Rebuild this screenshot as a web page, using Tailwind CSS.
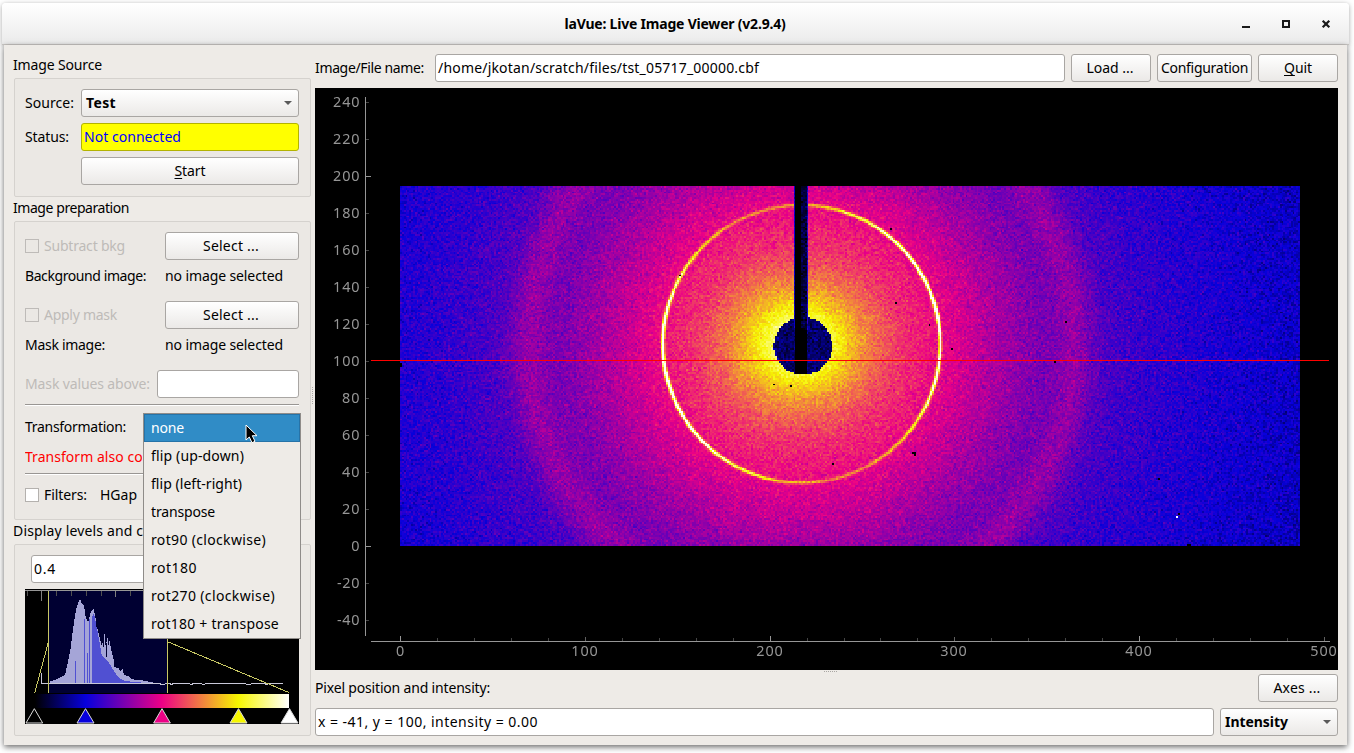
<!DOCTYPE html>
<html lang="en">
<head>
<meta charset="utf-8">
<title>laVue: Live Image Viewer (v2.9.4)</title>
<script src="https://cdn.jsdelivr.net/npm/@tailwindcss/browser@4"></script>
</head>
<body class="w-[1354px] h-[753px] overflow-hidden bg-white text-black font-['Noto_Sans','Open_Sans',sans-serif] text-[14px] leading-5 whitespace-nowrap">
<div class="flex flex-col w-[1354px] h-[753px] pt-[3px] overflow-hidden">
  <header class="ml-[2px] mr-[5px] h-[42px] shrink-0 flex items-center bg-linear-to-b from-white to-[#ebebeb] border-b border-[#ccc9c6] rounded-t-sm shadow-[0_1px_5px_rgba(0,0,0,0.35)]">
    <div class="w-[1236px] flex justify-center pl-[110px]"><b data-w="221">laVue: Live Image Viewer (v2.9.4)</b></div>
    <svg class="w-[100px] h-[14px]" viewBox="1238 17 100 14" shape-rendering="crispEdges">
      <rect x="1242" y="26" width="8" height="2" fill="#1a1a1a"/>
      <rect x="1283" y="21" width="6" height="6" fill="none" stroke="#1a1a1a" stroke-width="2"/>
      <path d="M1322.700 20.700L1329.300 27.300M1329.300 20.700L1322.700 27.300" stroke="#1a1a1a" stroke-width="2.200" shape-rendering="auto"/>
    </svg>
  </header>
  <main class="relative ml-[4px] w-[1343px] h-[700px] shrink-0 bg-[#eeebe7] flex shadow-[0_2px_6px_0px_rgba(0,0,0,0.6)]">
    <aside class="w-[307px] shrink-0 pl-[10px] pt-[10px] flex flex-col">
      <div class="-ml-px h-5"><span data-w="89">Image Source</span></div>
      <section class="mt-[3px] h-[119px] border border-[#d5d2ce] bg-[#ebe8e4] rounded-[2px] pl-[10px] pr-[11px] pt-[10px] flex flex-col gap-[6px]">
        <div class="flex items-center"><div class="w-[56px]"><span data-w="49">Source:</span></div>
          <div class="flex-1 h-7 border border-[#a9a6a3] rounded-[3px] bg-linear-to-b from-white to-[#ebe9e7] flex items-center justify-between pl-[4px] pr-[6px]"><b data-w="30">Test</b><svg class="w-2 h-1" viewBox="0 0 8 4"><path d="M0 0H8L4 4Z" fill="#5a5a5a"/></svg></div></div>
        <div class="flex items-center"><div class="w-[56px]"><span data-w="44">Status:</span></div>
          <div class="flex-1 h-7 border border-[#b3b300] rounded-[3px] bg-[#ffff00] text-[#0000ff] flex items-center pl-[2px]"><span data-w="97">Not connected</span></div></div>
        <div class="ml-[56px] h-7 border border-[#a9a6a3] rounded-[3px] bg-linear-to-b from-white to-[#ebe9e7] flex items-center justify-center"><span data-w="31"><u class="underline-offset-2">S</u>tart</span></div>
      </section>
      <div class="-ml-px mt-[1px] h-5"><span data-w="116">Image preparation</span></div>
      <section class="mt-[3px] h-[299px] border border-[#d5d2ce] bg-[#ebe8e4] rounded-[2px] pl-[10px] pr-[11px] pt-[10px] flex flex-col">
        <div class="flex items-center h-7 text-[#bebbb8]"><i class="w-[14px] h-[14px] border border-[#bebbb8] mr-[5px]"></i><div class="w-[121px]"><span data-w="81">Subtract bkg</span></div>
          <div class="flex-1 h-7 border border-[#a9a6a3] rounded-[3px] bg-linear-to-b from-white to-[#ebe9e7] text-black flex items-center justify-center pr-[2px]"><span data-w="56">Select ...</span></div></div>
        <div class="flex items-center h-8"><div class="w-[140px]"><span data-w="121">Background image:</span></div><span data-w="118">no image selected</span></div>
        <div class="mt-[9px] flex items-center h-7 text-[#bebbb8]"><i class="w-[14px] h-[14px] border border-[#bebbb8] mr-[5px]"></i><div class="w-[121px]"><span data-w="73">Apply mask</span></div>
          <div class="flex-1 h-7 border border-[#a9a6a3] rounded-[3px] bg-linear-to-b from-white to-[#ebe9e7] text-black flex items-center justify-center pr-[2px]"><span data-w="56">Select ...</span></div></div>
        <div class="flex items-center h-8"><div class="w-[140px]"><span data-w="80">Mask image:</span></div><span data-w="118">no image selected</span></div>
        <div class="mt-[9px] flex items-center h-7 text-[#bebbb8]"><div class="w-[132px]"><span data-w="125">Mask values above:</span></div><div class="flex-1 h-7 border border-[#a9a6a3] rounded-[3px] bg-white"></div></div>
        <div class="mt-[6px] h-[2px] border-t border-[#999693] bg-white"></div>
        <div class="mt-[11px] h-5"><span data-w="101">Transformation:</span></div>
        <div class="mt-[10px] h-5 w-[117px] overflow-hidden text-[#ff0000]"><span data-w="148">Transform also cosmic</span></div>
        <div class="mt-[6px] h-[2px] border-t border-[#999693] bg-white"></div>
        <div class="mt-[10px] flex items-center h-5"><i class="w-[14px] h-[14px] border border-[#b4b1ae] bg-white mr-[5px]"></i><div class="w-[56px]"><span data-w="43">Filters:</span></div><span data-w="37">HGap</span></div>
      </section>
      <div class="-ml-px mt-[1px] h-5 w-[150px] overflow-hidden"><span data-w="164">Display levels and colors</span></div>
      <section class="mt-[3px] h-[192px] border border-[#d5d2ce] bg-[#ebe8e4] rounded-[2px] pl-[10px] pr-[11px] pt-[10px]">
        <div class="ml-[6px] h-7 border border-[#a9a6a3] rounded-[3px] bg-white flex items-center pl-[2px]"><span data-w="22">0.4</span></div>
        <svg class="mt-[6px] block w-[274px] h-[135px]" viewBox="75 87 822 405" shape-rendering="crispEdges">
          <defs><linearGradient id="flame"><stop offset="0" stop-color="#000"/><stop offset=".2" stop-color="#0700dc"/><stop offset=".5" stop-color="#ec0086"/><stop offset=".8" stop-color="#f6f600"/><stop offset="1" stop-color="#fff"/></linearGradient></defs>
          <rect x="75" y="87" width="822" height="405" fill="#000"/>
          <rect x="146" y="93" width="357" height="306" fill="#000032"/>
          <path d="M150 371V365L165 360L185 350L195 345L205 300L212 265L218 215L223 180L230 140L236 125L241 118L245 130L252 135L256 165L261 182L267 185L270 160L280 145L286 170L292 205L300 235L305 258L310 240L314 218L317 262L322 228L325 258L328 240L333 265L340 295L348 325L355 322L362 335L368 325L372 345L385 348L395 358L420 360L445 365L470 370Z" fill="#a5a5d7"/>
          <path d="M275 371V172L282 160L290 200L300 255L305 285L325 305L340 330L355 352L375 363L450 370Z" fill="#5050d2"/>
          <path d="M226.500 303V371M253.500 177V371M262.500 280V371M268 177V371" stroke="#5050d2" stroke-width="3"/>
          <path d="M289 200V160M311 262V235M319 290V250M344 320V310" stroke="#000032" stroke-width="3"/>
          <path d="M124.500 340V370.500H480l4 3h10l4-3h12l3 3h3l3-3h50l4 3h3l3-3h26l3 3h6l3-3h120l3 3h12l3-3h40l3 3h3l3-3H849" fill="none" stroke="#c8c8d8" stroke-width="3"/>
          <path d="M75 91.500H897" stroke="#969696" stroke-width="3"/>
          <path d="M82.500 93V107M169.500 93V107M214.500 93V107M259.500 93V107M304.500 93V107M391.500 93V107" stroke="#505050" stroke-width="3"/>
          <path d="M124.500 93V123M346.500 93V111" stroke="#808080" stroke-width="3"/>
          <path d="M145.500 93V399M502.500 93V399M145.500 245L104 399M502.500 245L868 398" stroke="#c8c864" stroke-width="3" fill="none"/>
          <rect x="105" y="402" width="762" height="42" fill="url(#flame)"/>
          <g stroke="#dcdcdc" stroke-width="3" shape-rendering="auto"><path d="M103 446L78 489H128Z" fill="#000"/><path d="M256.500 446L231 489H282Z" fill="#0700dc"/><path d="M486 446L461 489H511Z" fill="#ec0086"/><path d="M715.500 446L690 489H741Z" fill="#f6f600"/><path d="M868.500 446L843 489H894Z" fill="#fff"/></g>
        </svg>
      </section>
    </aside>
    <div class="w-[4px] shrink-0 flex items-center justify-center"><i class="mt-[1px] w-[2px] h-[17px] border-l border-dotted border-[#aaa7a4]"></i></div>
    <section class="w-[1023px] shrink-0 pt-[9px] flex flex-col">
      <div class="flex items-center h-7">
        <div class="w-[120px]"><span data-w="109">Image/File name:</span></div>
        <div class="w-[630px] h-7 border border-[#a9a6a3] rounded-[3px] bg-white flex items-center pl-[2px]"><span data-w="321">/home/jkotan/scratch/files/tst_05717_00000.cbf</span></div>
        <div class="ml-[6px] w-[80px] h-7 border border-[#a9a6a3] rounded-[3px] bg-linear-to-b from-white to-[#ebe9e7] flex items-center justify-center pr-[2px]"><span data-w="47">Load ...</span></div>
        <div class="ml-[6px] w-[95px] h-7 border border-[#a9a6a3] rounded-[3px] bg-linear-to-b from-white to-[#ebe9e7] flex items-center justify-center"><span data-w="87">Configuration</span></div>
        <div class="ml-[6px] w-[80px] h-7 border border-[#a9a6a3] rounded-[3px] bg-linear-to-b from-white to-[#ebe9e7] flex items-center justify-center"><span data-w="28"><u class="underline-offset-2">Q</u>uit</span></div>
      </div>
      <div class="relative mt-[6px] h-[582px] bg-black">
        <canvas id="frame" width="487" height="195" class="absolute left-[85px] top-[98px] w-[900px] h-[360px] [image-rendering:pixelated]"></canvas>
        <svg id="axes" class="absolute inset-0 w-[1023px] h-[582px]" viewBox="315 88 1023 582" fill="#969696" font-size="14.400">
          <g shape-rendering="crispEdges"><rect x="365" y="97" width="1" height="539"/><rect x="371" y="641" width="959" height="1"/><rect x="371" y="360" width="958" height="1" fill="#ff0000"/></g>
        </svg>
      </div>
      <div class="mt-[4px] h-7 flex items-center justify-between"><span data-w="175">Pixel position and intensity:</span>
        <div class="w-[80px] h-7 border border-[#a9a6a3] rounded-[3px] bg-linear-to-b from-white to-[#ebe9e7] flex items-center justify-center pr-[2px]"><span data-w="47">Axes ...</span></div></div>
      <div class="mt-[6px] flex gap-[6px]"><div class="w-[899px] h-7 border border-[#a9a6a3] rounded-[3px] bg-white flex items-center pl-[2px]"><span data-w="220">x = -41, y = 100, intensity = 0.00</span></div>
        <div class="flex-1 h-7 border border-[#a9a6a3] rounded-[3px] bg-linear-to-b from-white to-[#ebe9e7] flex items-center justify-between pl-[4px] pr-[6px]"><b data-w="63">Intensity</b><svg class="w-2 h-1" viewBox="0 0 8 4"><path d="M0 0H8L4 4Z" fill="#5a5a5a"/></svg></div></div>
    </section>
    <i class="absolute left-[820px] top-[626px] w-[13px] h-px border-t border-dotted border-[#aaa7a4]"></i>
    <div class="absolute left-[139px] top-[368px] w-[158px] h-[226px] border border-[#8f8c89] bg-[#eeebe7] flex flex-col">
      <div class="h-7 bg-[#308cc6] border border-[#2673a8] text-white flex items-center pl-[6px]"><span data-w="33">none</span></div>
      <div class="h-7 flex items-center pl-[7px]"><span data-w="93">flip (up-down)</span></div>
      <div class="h-7 flex items-center pl-[7px]"><span data-w="91">flip (left-right)</span></div>
      <div class="h-7 flex items-center pl-[7px]"><span data-w="64">transpose</span></div>
      <div class="h-7 flex items-center pl-[7px]"><span data-w="115">rot90 (clockwise)</span></div>
      <div class="h-7 flex items-center pl-[7px]"><span data-w="46">rot180</span></div>
      <div class="h-7 flex items-center pl-[7px]"><span data-w="124">rot270 (clockwise)</span></div>
      <div class="h-7 flex items-center pl-[7px]"><span data-w="128">rot180 + transpose</span></div>
    </div>
    <svg class="absolute left-[240px] top-[377px] w-[16px] h-[24px]" viewBox="0 0 16 24"><path d="M2 3V18L5.300 15L8 20.700L11 19.300L8.300 13.700H13Z" fill="#000" stroke="#fff" stroke-width="1"/></svg>
  </main>
</div>
<script>
// Adjust tracking so every label takes its nominal width.
function fit(el) {
  const w = +el.dataset.w, n = el.textContent.length;
  let ls = 0.01;
  for (let k = 0; k < 3; k++) {
    el.style.letterSpacing = ls + 'px';
    ls += (w - el.getBoundingClientRect().width) / n;
  }
  el.style.letterSpacing = ls + 'px';
}
window.addEventListener('load', () => document.querySelectorAll('[data-w]').forEach(fit));

// Axis ticks and numbers.
const axes = document.getElementById('axes'), NS = 'http://www.w3.org/2000/svg';
function tick(x, y, w, h, c) { const r = document.createElementNS(NS, 'rect'); for (const [k, v] of Object.entries({x, y, width: w, height: h, fill: c, 'shape-rendering': 'crispEdges'})) r.setAttribute(k, v); axes.append(r); }
function label(s, x, y, a) { const t = document.createElementNS(NS, 'text'); t.setAttribute('x', x); t.setAttribute('y', y); t.setAttribute('text-anchor', a); t.setAttribute('textLength', s.replace('-', '').length * 8.8 + (s[0] === '-' ? 5 : 0)); t.textContent = s; axes.append(t); }
for (let v = -40; v <= 240; v += 20) {
  const y = Math.round(546 - 1.848 * v), major = v % 200 === 0;
  tick(366, y, major ? 5 : 3, 1, major ? '#969696' : '#444444');
  label(String(v), 359.5, y + 5, 'end');
}
for (let v = 0; v <= 500; v += 20) {
  const x = Math.round(400 + 1.848 * v), h = v % 200 === 0 ? 5 : v % 100 === 0 ? 4 : 3;
  tick(x, 641 - h, 1, h, h === 5 ? '#969696' : h === 4 ? '#606060' : '#444444');
  if (v % 100 === 0) label(String(v), x - (v ? .5 : 0), 656, 'middle');
}

// Simulated detector frame: radial scattering, two rings, beam stop, noise.
const cv = document.getElementById('frame'), g = cv.getContext('2d'), im = g.createImageData(487, 195);
const stops = [[0, 0, 0, 0], [.2, 7, 0, 220], [.5, 236, 0, 134], [.8, 246, 246, 0], [1, 255, 255, 255]];
const prof = [[0, .9], [30, .825], [42, .75], [60, .665], [80, .6], [100, .55], [125, .52], [150, .48], [175, .44], [200, .4], [240, .345], [270, .32], [300, .29], [350, .255], [400, .232], [450, .205], [500, .185], [600, .16]];
let seed = 12345;
const rnd = () => (seed = (seed * 1664525 + 1013904223) >>> 0) / 4294967296;
const gauss = () => (rnd() + rnd() + rnd() + rnd() - 2) * 1.73;
for (let j = 0; j < 195; j++) for (let i = 0; i < 487; i++) {
  const x = 400 + (i + .5) * 1.848, y = 186 + (j + .5) * 1.846, dx = x - 801.6, dy = y - 344;
  const r = Math.hypot(dx, dy), th = Math.atan2(-dy, dx);
  let k = 1; while (k < prof.length - 1 && prof[k][0] < r) k++;
  const [r0, a] = prof[k - 1], [r1, b] = prof[k];
  let v = a + (b - a) * (r - r0) / (r1 - r0);
  v += .035 * Math.abs(Math.cos(th)) * Math.exp(-r / 90) * (dx < 0 ? 2.2 : .8);
  v += .065 * Math.exp(-((r - 275) ** 2) / 340);
  v += gauss() * (.027 + .00001 * r);
  v += (.17 + .5 * Math.cos(th - .3) ** 2) * Math.exp(-((r - 138.700) ** 2) / 2.8);
  if (Math.hypot(x - 803, y - 346) < 29) v = .1 + gauss() * .03;
  if (y < 330) {
    if (x > 793 && x < 796) v = .19 + gauss() * .03;
    else if (x >= 801 && x < 806) v = .05 + gauss() * .03;
    else if (x >= 806 && x < 808.500) v = .22 + gauss() * .04;
  }
  if (x >= 795.500 && x < (y < 330 ? 801 : 807) && y < 375) v = 0;
  v = Math.min(1, Math.max(0, v));
  let s = 1; while (s < 4 && stops[s][0] < v) s++;
  const p = stops[s - 1], q = stops[s], f = (v - p[0]) / (q[0] - p[0]), o = (j * 487 + i) * 4;
  for (let c = 0; c < 3; c++) im.data[o + c] = p[c + 1] + (q[c + 1] - p[c + 1]) * f;
  im.data[o + 3] = 255;
}
g.putImageData(im, 0, 0);
// Dead and hot pixels, given in window coordinates.
for (const [x, y, w, h, c] of [[891, 229, 1, 1], [896, 303, 1, 1], [929, 326, 1, 1], [952, 349, 1, 1], [774, 384, 1, 1], [791, 386, 1, 1], [913, 453, 2, 1], [915, 455, 1, 1], [833, 464, 1, 1], [680, 275, 1, 1], [1066, 322, 1, 1], [1055, 362, 1, 1], [1158, 478, 1, 1], [1179, 514, 1, 1], [1188, 544.500, 2, 1], [401, 365, 1, 2], [1177, 517, 1, 1, '#fff']]) {
  g.fillStyle = c || '#000'; g.fillRect(Math.floor((x - 400) / 1.848), Math.floor((y - 186) / 1.846), w, h);
}
</script>
</body>
</html>
